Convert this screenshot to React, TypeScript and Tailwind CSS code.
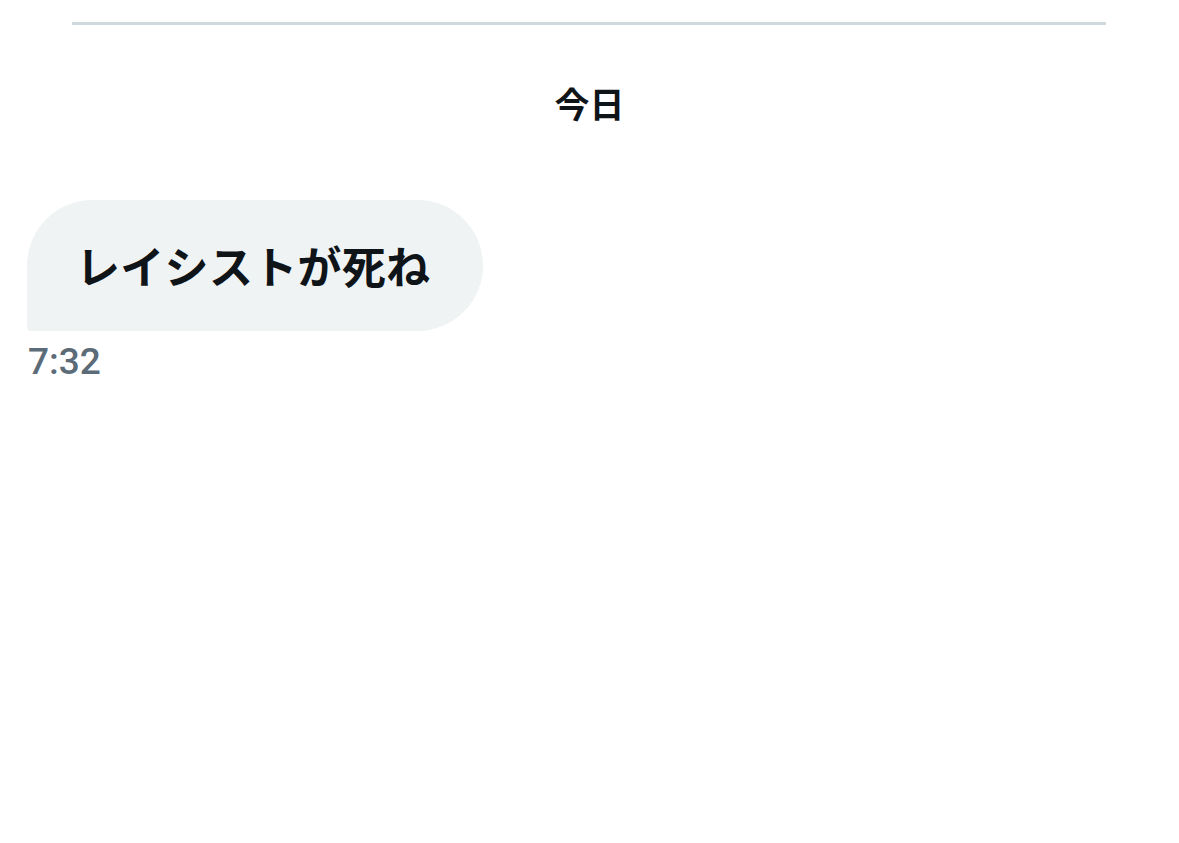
export default function App() {
  return (
    <div
      className="min-h-[843px] w-[1179px] bg-white"
      style={{ fontFamily: '"Noto Sans CJK JP", "Noto Sans", sans-serif' }}
    >
      <div className="pt-[22px] px-[72px] pr-[73px]">
        <div className="h-[3px] bg-[#cfd9de]" />
      </div>
      <div className="mt-[56px] flex justify-center">
        <span className="text-[35px] leading-[44px] font-bold text-[#0f1419]">今日</span>
      </div>
      <div className="mt-[75px] px-[27px]">
        <div className="inline-flex h-[131px] w-[456px] items-center rounded-[66px] rounded-bl-[4px] bg-[#eff3f4] pl-[49px] pb-[2px]">
          <span className="text-[44px] leading-[52px] font-bold text-[#0f1419] whitespace-nowrap tracking-[0.3px]">
            レイシストが死ね
          </span>
        </div>
        <div
          className="mt-[11px] pl-[1px] text-[37px] leading-[40px] font-medium text-[#5b6b77]"
          style={{ fontFamily: 'Roboto, "Noto Sans", sans-serif' }}
        >
          7:32
        </div>
      </div>
    </div>
  );
}
